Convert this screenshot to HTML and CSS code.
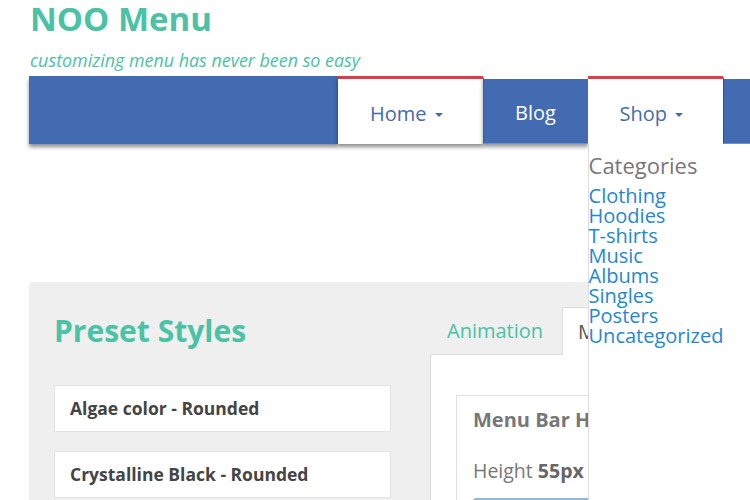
FILE: index.html
```html
<!DOCTYPE html>
<html lang="en">
<head>
<meta charset="utf-8">
<title>NOO Menu</title>
<link rel="stylesheet" href="styles.css">
</head>
<body>
<header class="site-header">
  <h1 class="site-title">NOO Menu</h1>
  <p class="tagline">customizing menu has never been so easy</p>
</header>

<nav class="navbar">
  <div class="nav-lead"></div>
  <ul class="menu">
    <li class="menu-item active"><a href="#">Home</a><span class="caret"></span></li>
    <li class="menu-item plain"><a href="#">Blog</a></li>
    <li class="menu-item active open"><a href="#">Shop</a><span class="caret"></span>
      <div class="dropdown">
        <h3 class="dropdown-title">Categories</h3>
        <ul class="dropdown-list">
          <li><a href="#">Clothing</a></li>
          <li><a href="#">Hoodies</a></li>
          <li><a href="#">T-shirts</a></li>
          <li><a href="#">Music</a></li>
          <li><a href="#">Albums</a></li>
          <li><a href="#">Singles</a></li>
          <li><a href="#">Posters</a></li>
          <li><a href="#">Uncategorized</a></li>
        </ul>
      </div>
    </li>
    <li class="menu-fill"></li>
  </ul>
</nav>

<section class="panel">
  <div class="presets">
    <h2 class="panel-title">Preset Styles</h2>
    <div class="preset-card">Algae color - Rounded</div>
    <div class="preset-card">Crystalline Black - Rounded</div>
  </div>
  <div class="settings">
    <div class="tabs">
      <div class="tab">Animation</div>
      <div class="tab tab-active">Menu Bar</div>
    </div>
    <div class="tab-panel">
      <div class="setting-box">
        <h4 class="setting-title">Menu Bar Height</h4>
        <p class="setting-value">Height <b>55px</b></p>
        <div class="slider"></div>
      </div>
    </div>
  </div>
</section>
</body>
</html>
```

FILE: styles.css
```css
* { box-sizing: border-box; }

html, body {
  margin: 0;
  padding: 0;
  width: 750px;
  height: 500px;
  overflow: hidden;
  background: #ffffff;
  font-family: "Open Sans", "Noto Sans", sans-serif;
}

a { text-decoration: none; color: inherit; }

.site-header {
  padding: 0 0 0 30px;
}

.site-title {
  margin: 0;
  font-size: 33px;
  line-height: 38px;
  font-weight: 700;
  color: #4ac2a6;
}

.tagline {
  margin: 11px 0 0 0;
  font-size: 17.9px;
  line-height: 22px;
  font-style: italic;
  color: #4ac2a6;
}

.navbar {
  margin: 5px 0 0 29px;
  width: 760px;
  height: 68px;
  display: flex;
  position: relative;
  z-index: 5;
}

.nav-lead {
  width: 309px;
  background: #436bb1;
  box-shadow: 0 3px 4px rgba(0, 0, 0, 0.45);
}

.menu {
  list-style: none;
  margin: 0;
  padding: 0;
  display: flex;
  flex: 1;
}

.menu-item {
  position: relative;
  display: flex;
  align-items: center;
  height: 68px;
  border-top: 3px solid #ffffff;
  padding-top: 4px;
  font-size: 20px;
  line-height: 28px;
}

.menu-item.active {
  background: #ffffff;
  border-top-color: #dc3d4b;
  color: #436bb1;
  padding: 4px 40px 0 32px;
  box-shadow: 0 3px 4px rgba(0, 0, 0, 0.45);
}

.menu-item.open {
  box-shadow: none;
}

.menu-item.plain {
  background: #436bb1;
  color: #ffffff;
  width: 105px;
  justify-content: center;
  border-left: 1px solid #3a5e9e;
  border-bottom: 1px solid #6f8fc6;
  box-shadow: 0 3px 4px rgba(0, 0, 0, 0.4);
}

.caret {
  display: inline-block;
  margin-left: 8px;
  margin-top: 3px;
  width: 0;
  height: 0;
  border-left: 4.5px solid transparent;
  border-right: 4.5px solid transparent;
  border-top: 4.5px solid #436bb1;
}

.menu-fill {
  flex: 1;
  height: 68px;
  border-top: 3px solid #ffffff;
  border-left: 1px solid #2f4f8a;
  background: #436bb1;
  border-bottom: 1px solid #6f8fc6;
}

.dropdown {
  position: absolute;
  top: 65px;
  left: 0;
  width: 200px;
  height: 360px;
  background: #ffffff;
  border-left: 1px solid #dddddd;
  padding: 8px 0 0 0;
}

.dropdown-title {
  margin: 0;
  font-size: 22px;
  line-height: 26px;
  font-weight: 400;
  color: #777777;
}

.dropdown-list {
  list-style: none;
  margin: 8px 0 0 0;
  padding: 0;
}

.dropdown-list li {
  font-size: 20px;
  line-height: 20px;
  color: #1e88d3;
}

.panel {
  margin: 138px 0 0 29px;
  width: 760px;
  height: 240px;
  background: #efefef;
  border-radius: 4px;
  display: flex;
  padding: 31px 0 0 25px;
}

.presets {
  width: 337px;
  flex: none;
}

.panel-title {
  margin: 0 0 36px 0;
  font-size: 30px;
  line-height: 36px;
  font-weight: 700;
  color: #4ac2a6;
}

.preset-card {
  background: #ffffff;
  border: 1px solid #e2e2e2;
  padding: 12px 15px;
  font-size: 17.5px;
  line-height: 21px;
  font-weight: 700;
  color: #444444;
  margin-bottom: 19px;
}

.settings {
  margin-left: 39px;
  margin-top: -6px;
  flex: 1;
}

.tabs {
  display: flex;
  height: 48px;
}

.tab {
  padding: 0 20px 0 17px;
  width: 132px;
  font-size: 20px;
  line-height: 48px;
  color: #4ac2a6;
  border-bottom: 1px solid #dddddd;
}

.tab-active {
  width: auto;
  background: #ffffff;
  color: #555555;
  border: 1px solid #dddddd;
  border-bottom: none;
  padding: 0 15px;
}

.tab-panel {
  background: #ffffff;
  border-left: 1px solid #dddddd;
  height: 200px;
  padding: 40px 0 0 25px;
}

.setting-box {
  border: 1px solid #e0e0e0;
  padding: 12px 16px 0 16px;
  height: 200px;
}

.setting-title {
  margin: 0;
  font-size: 20px;
  line-height: 24px;
  font-weight: 700;
  color: #777777;
}

.setting-value {
  margin: 27px 0 0 0;
  font-size: 19.5px;
  line-height: 24px;
  color: #777777;
}

.setting-value b {
  color: #666666;
}

.slider {
  margin-top: 15px;
  height: 6px;
  border-radius: 3px;
  background: #8fb8dc;
}
```
